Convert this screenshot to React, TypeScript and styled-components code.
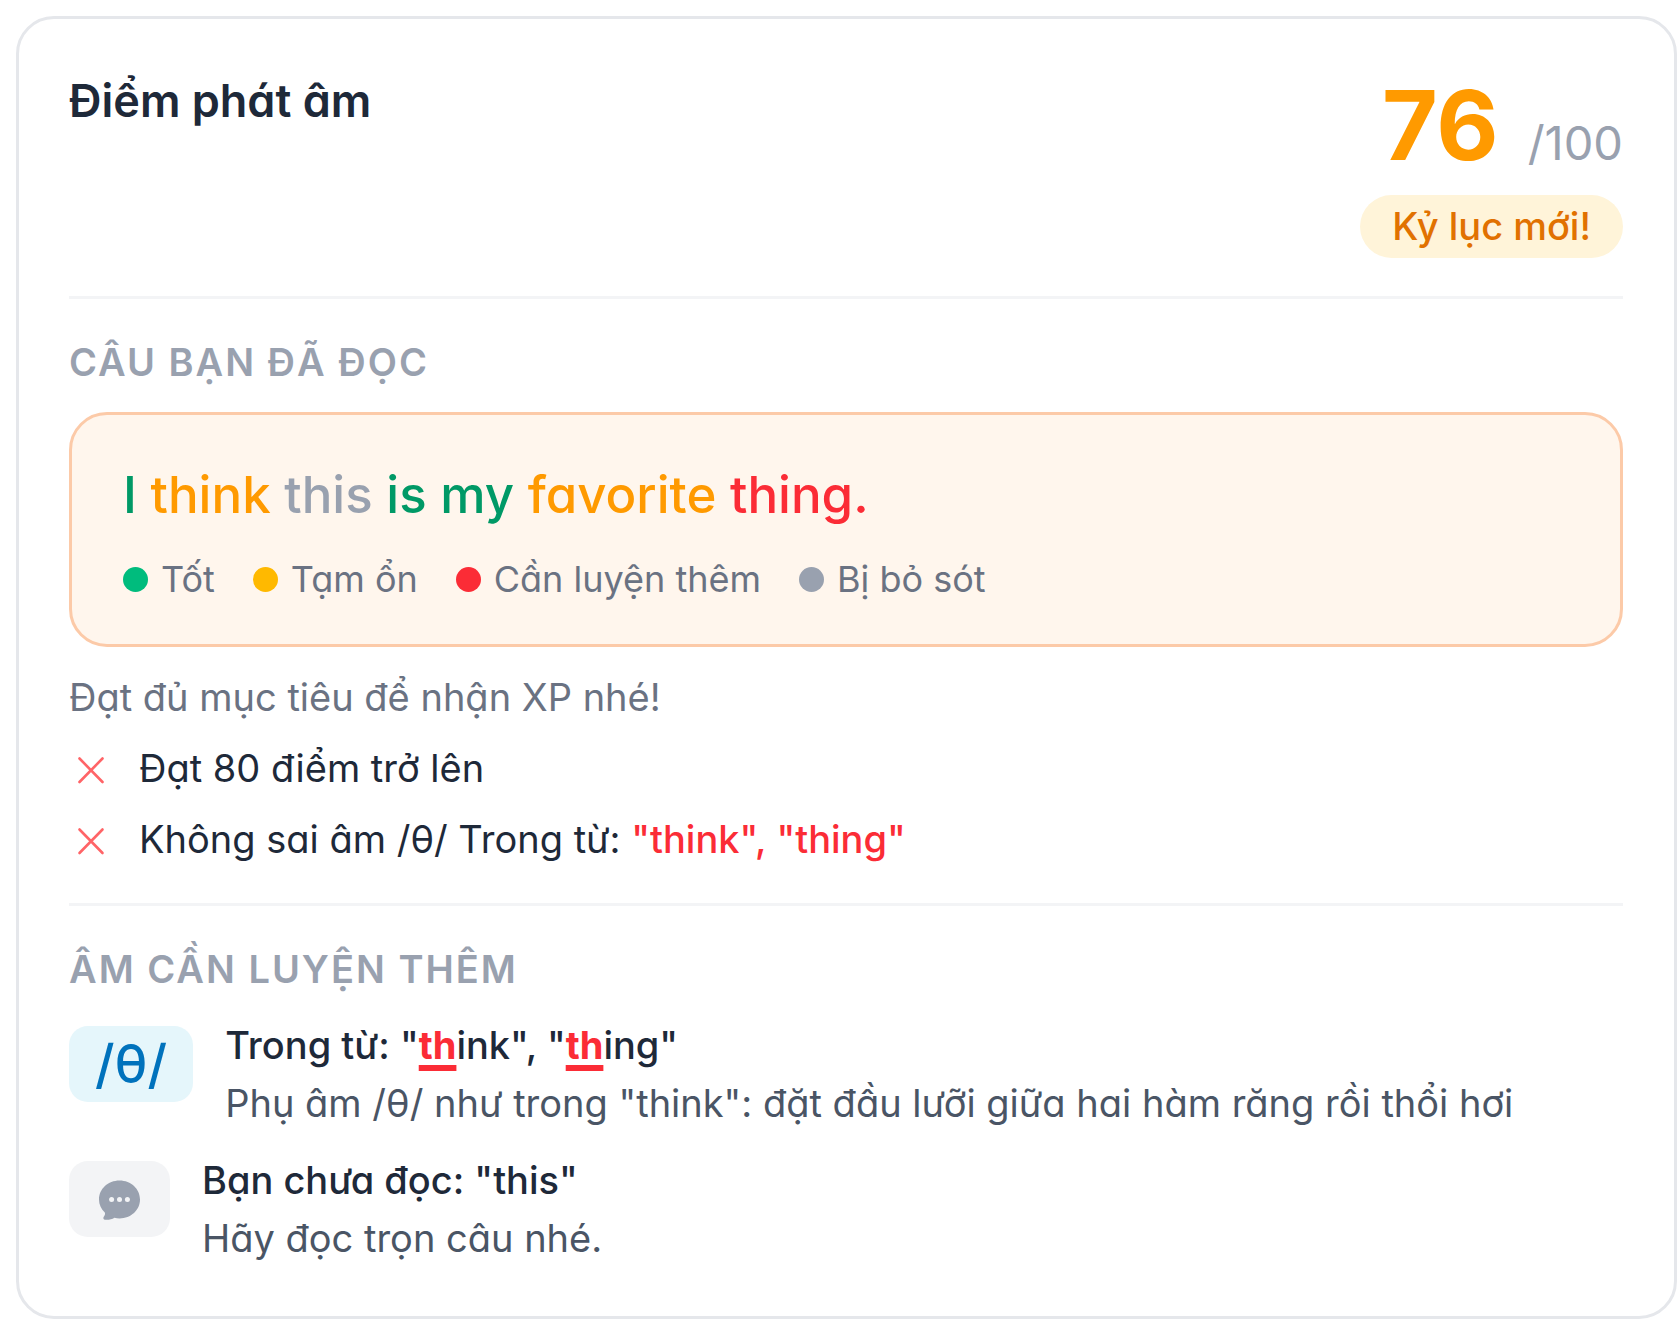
import React from "react";
import styled, { createGlobalStyle } from "styled-components";

const color = {
  ink: "#1e2939",
  body: "#4a5565",
  muted: "#6a7282",
  faint: "#99a1af",
  line: "#e5e7eb",
  hair: "#f3f4f6",
  red: "#fb2c36",
  amber: "#ff9a00",
  green: "#009966",
};

type Tone = "good" | "fair" | "bad" | "missed";

const wordColor: Record<Tone, string> = {
  good: color.green,
  fair: color.amber,
  bad: color.red,
  missed: color.faint,
};

const dotColor: Record<Tone, string> = {
  good: "#00bc7d",
  fair: "#ffb900",
  bad: color.red,
  missed: color.faint,
};

const GlobalStyle = createGlobalStyle`
  * { box-sizing: border-box; }
  body {
    margin: 0;
    background: #fff;
    color: ${color.ink};
    font-family: Inter, "Noto Sans", sans-serif;
    font-feature-settings: "cv11";
    font-size: 38px;
    line-height: 58px;
  }
  h1, h2, p, ul { margin: 0; padding: 0; }
  ul { list-style: none; }
`;

const Page = styled.div`
  padding: 16px 0 16px 16px;
`;

const Card = styled.main`
  border: 3px solid ${color.line};
  border-radius: 38px;
  padding: 50px 51px 49px 50px;
`;

const Header = styled.header`
  display: flex;
  justify-content: space-between;
  align-items: flex-start;
  padding-bottom: 38px;
  border-bottom: 3px solid ${color.hair};
`;

const Title = styled.h1`
  font-size: 45px;
  line-height: 63px;
  font-weight: 600;
`;

const ScoreColumn = styled.div`
  display: flex;
  flex-direction: column;
  align-items: flex-end;
  gap: 13px;
`;

const Score = styled.p`
  display: flex;
  align-items: baseline;
  gap: 29px;
`;

const ScoreValue = styled.strong`
  font-size: 96px;
  line-height: 113px;
  font-weight: 700;
  color: ${color.amber};
`;

const ScoreMax = styled.span`
  font-size: 47px;
  line-height: 58px;
  color: ${color.faint};
`;

const Pill = styled.span`
  padding: 0 32px;
  border-radius: 32px;
  background: #fff4d9;
  color: #e17100;
  font-weight: 500;
  line-height: 63px;
`;

const Section = styled.section`
  display: flex;
  flex-direction: column;
  padding-top: 34px;

  & + & {
    margin-top: 35px;
    border-top: 3px solid ${color.hair};
  }
`;

const SectionTitle = styled.h2`
  margin-bottom: 18px;
  font-size: 38px;
  font-weight: 600;
  letter-spacing: 2px;
  text-transform: uppercase;
  color: ${color.faint};
`;

const ReadingBox = styled.div`
  display: flex;
  flex-direction: column;
  gap: 20px;
  margin-top: 3px;
  padding: 42px 51px 39px;
  border: 3px solid #fccaa8;
  border-radius: 38px;
  background: #fff6ed;
`;

const Sentence = styled.p`
  font-size: 51px;
  line-height: 76px;
  font-weight: 500;
`;

const Word = styled.span<{ $tone: Tone }>`
  color: ${({ $tone }) => wordColor[$tone]};
`;

const Legend = styled.ul`
  display: flex;
  flex-wrap: wrap;
  gap: 38px;
  font-size: 36px;
  line-height: 52px;
  color: ${color.muted};
`;

const LegendItem = styled.li`
  display: flex;
  align-items: center;
  gap: 13px;
`;

const Dot = styled.span<{ $tone: Tone }>`
  width: 25px;
  height: 25px;
  border-radius: 50%;
  background: ${({ $tone }) => dotColor[$tone]};
`;

const Goal = styled.p`
  margin-top: 21px;
  color: ${color.muted};
`;

const GoalList = styled.ul`
  display: flex;
  flex-direction: column;
  gap: 13px;
  margin-top: 13px;
`;

const GoalItem = styled.li`
  display: flex;
  align-items: center;
  gap: 25px;
`;

const CrossIcon = styled.svg`
  flex: none;
  width: 45px;
  height: 45px;
  stroke: #ff6467;
`;

const Wrong = styled.span`
  font-weight: 500;
  color: ${color.red};
`;

const TipList = styled.ul`
  display: flex;
  flex-direction: column;
  gap: 19px;
`;

const Tip = styled.li`
  display: flex;
  align-items: flex-start;
  gap: 32px;
`;

const Chip = styled.span<{ $plain?: boolean }>`
  display: flex;
  align-items: center;
  flex: none;
  height: 76px;
  margin-top: 10px;
  padding: 0 26px;
  border-radius: 19px;
  font-size: 53px;
  font-weight: 500;
  color: ${({ $plain }) => ($plain ? color.faint : "#0072bc")};
  background: ${({ $plain }) => ($plain ? color.hair : "#e5f6fb")};
`;

const TipTitle = styled.p`
  font-weight: 500;
`;

const TipText = styled.p`
  color: ${color.body};
`;

const Mark = styled.u`
  font-weight: 700;
  color: ${color.red};
  text-decoration-thickness: 6px;
  text-underline-offset: 6px;
  text-decoration-skip-ink: none;
`;

const words: [string, Tone][] = [
  ["I", "good"],
  ["think", "fair"],
  ["this", "missed"],
  ["is", "good"],
  ["my", "good"],
  ["favorite", "fair"],
  ["thing.", "bad"],
];

const legend: [string, Tone][] = [
  ["Tốt", "good"],
  ["Tạm ổn", "fair"],
  ["Cần luyện thêm", "bad"],
  ["Bị bỏ sót", "missed"],
];

function Cross() {
  return (
    <CrossIcon viewBox="0 0 45 45" fill="none" strokeWidth="2.6" strokeLinecap="round" aria-hidden="true">
      <path d="M10.500 12.500 33.500 36M33.500 12.500 10.500 36" />
    </CrossIcon>
  );
}

function ChatBubble() {
  return (
    <svg width="49" height="49" viewBox="0 0 49 49" aria-hidden="true">
      <path
        fill="currentColor"
        d="M24.5 5.500C13 5.500 4 14 4 24.500c0 5 2.100 9.500 5.800 12.900.7 1.200.1 2.800-1.200 4.600-.7 1.400 0 2.600 1.400 2.700 3.800.3 6.900-.4 9.400-2 1.700.500 3.400.7 5.100.7C36 43.400 45 35 45 24.500S36 5.500 24.500 5.500Z"
      />
      <g fill={color.hair}>
        <circle cx="16.600" cy="24.500" r="2.500" />
        <circle cx="24.500" cy="24.500" r="2.500" />
        <circle cx="32.400" cy="24.500" r="2.500" />
      </g>
    </svg>
  );
}

export default function App() {
  return (
    <>
      <GlobalStyle />
      <Page>
        <Card>
          <Header>
            <Title>Điểm phát âm</Title>
            <ScoreColumn>
              <Score>
                <ScoreValue>76</ScoreValue>
                <ScoreMax>/100</ScoreMax>
              </Score>
              <Pill>Kỷ lục mới!</Pill>
            </ScoreColumn>
          </Header>

          <Section>
            <SectionTitle>Câu bạn đã đọc</SectionTitle>
            <ReadingBox>
              <Sentence>
                {words.map(([text, tone], i) => (
                  <React.Fragment key={text}>
                    {i > 0 && " "}
                    <Word $tone={tone}>{text}</Word>
                  </React.Fragment>
                ))}
              </Sentence>
              <Legend>
                {legend.map(([label, tone]) => (
                  <LegendItem key={tone}>
                    <Dot $tone={tone} />
                    {label}
                  </LegendItem>
                ))}
              </Legend>
            </ReadingBox>
            <Goal>Đạt đủ mục tiêu để nhận XP nhé!</Goal>
            <GoalList>
              <GoalItem>
                <Cross />
                <span>Đạt 80 điểm trở lên</span>
              </GoalItem>
              <GoalItem>
                <Cross />
                <span>
                  Không sai âm /θ/ Trong từ: <Wrong>"think", "thing"</Wrong>
                </span>
              </GoalItem>
            </GoalList>
          </Section>

          <Section>
            <SectionTitle>Âm cần luyện thêm</SectionTitle>
            <TipList>
              <Tip>
                <Chip>/θ/</Chip>
                <div>
                  <TipTitle>
                    Trong từ: "<Mark>th</Mark>ink", "<Mark>th</Mark>ing"
                  </TipTitle>
                  <TipText>Phụ âm /θ/ như trong "think": đặt đầu lưỡi giữa hai hàm răng rồi thổi hơi</TipText>
                </div>
              </Tip>
              <Tip>
                <Chip $plain>
                  <ChatBubble />
                </Chip>
                <div>
                  <TipTitle>Bạn chưa đọc: "this"</TipTitle>
                  <TipText>Hãy đọc trọn câu nhé.</TipText>
                </div>
              </Tip>
            </TipList>
          </Section>
        </Card>
      </Page>
    </>
  );
}
